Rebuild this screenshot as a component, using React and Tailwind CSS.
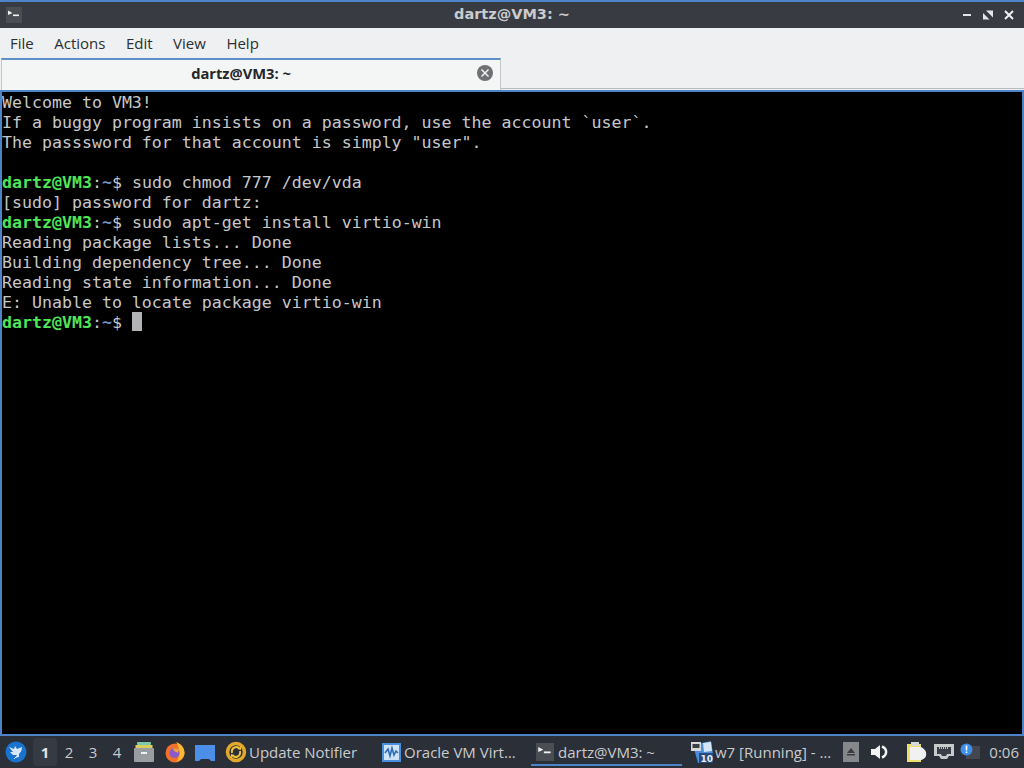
import React from 'react';

const mono = "font-['DejaVu_Sans_Mono',monospace]";

const lines = [
  { text: 'Welcome to VM3!' },
  { text: 'If a buggy program insists on a password, use the account `user`.' },
  { text: 'The passsword for that account is simply "user".' },
  { text: '\u00a0' },
  { prompt: true, text: 'sudo chmod 777 /dev/vda' },
  { text: '[sudo] password for dartz:' },
  { prompt: true, text: 'sudo apt-get install virtio-win' },
  { text: 'Reading package lists... Done' },
  { text: 'Building dependency tree... Done' },
  { text: 'Reading state information... Done' },
  { text: 'E: Unable to locate package virtio-win' },
];

const Prompt = () => (
  <>
    <span className="font-bold text-[#4fe65a]">dartz@VM3</span>
    <span>:</span>
    <span className="font-bold text-[#6f8fc4]">~</span>
    <span>$ </span>
  </>
);

const TermIcon = ({ size = 16 }) => (
  <svg width={size} height={size} viewBox="0 0 16 16">
    <rect width="16" height="16" fill="#4a4d52" />
    <path d="M2 3.500 L6.500 6 L2 8 Z" fill="#f2f2f2" />
    <rect x="7" y="7.500" width="6" height="1.600" fill="#f2f2f2" />
  </svg>
);

const TitleBar = () => (
  <div className="h-[26px] bg-[#383b42] flex items-center">
    <div className="w-[90px] pl-[6px]">
      <TermIcon />
    </div>
    <div className="flex-1 text-center font-['DejaVu_Sans',sans-serif] font-bold text-[14.500px] text-[#c9cbce]">
      dartz@VM3: ~
    </div>
    <div className="w-[90px] flex items-center justify-end gap-[9px] pr-[9px]">
      <svg width="12" height="12" viewBox="0 0 12 12">
        <rect x="2" y="5" width="8" height="2" fill="#e4e5e6" />
      </svg>
      <svg width="12" height="12" viewBox="0 0 12 12">
        <path d="M4 1.500 H11 V8.500 Z" fill="#e4e5e6" />
        <path d="M1 4 L7.500 10.500 H1 Z" fill="#e4e5e6" />
      </svg>
      <svg width="12" height="12" viewBox="0 0 12 12">
        <path d="M2 2 L10 10 M10 2 L2 10" stroke="#f0f0f0" strokeWidth="2" />
      </svg>
    </div>
  </div>
);

const MenuBar = () => (
  <div className="h-[30px] bg-[#eff0f1] flex items-center pl-[10px] gap-[20.500px] font-['Open_Sans',sans-serif] text-[15px] text-[#2b2e33]">
    {['File', 'Actions', 'Edit', 'View', 'Help'].map((m) => (
      <span key={m}>{m}</span>
    ))}
  </div>
);

const TabBar = () => (
  <div className="h-[32px] bg-[#eff0f1] flex items-end">
    <div className="w-[500px] ml-[1px] h-[32px] bg-[#f4f5f5] border-t-2 border-t-[#5e8fc6] border-x border-x-[#c4c6c8] flex items-center relative">
      <span className="w-full text-center pr-[20px] pb-[4px] font-['Open_Sans',sans-serif] font-bold text-[14.700px] text-[#23262b]">
        dartz@VM3: ~
      </span>
      <svg className="absolute right-[7px] top-[5px]" width="16" height="16" viewBox="0 0 16 16">
        <circle cx="8" cy="8" r="8" fill="#6e7074" />
        <path d="M4.500 4.500 L11.500 11.500 M11.500 4.500 L4.500 11.500" stroke="#f0f0f0" strokeWidth="1.500" />
      </svg>
    </div>
    <div className="flex-1 h-[2px] mb-[1px] bg-[#eff0f1] border-b border-b-[#b9bbbd]" />
  </div>
);

const Terminal = () => (
  <div className={`flex-1 bg-black border-x-2 border-x-[#4d84c8] border-t-2 border-t-[#4d84c8] pt-[1px] text-[#c6c8ca] text-[16.600px] leading-[20px] overflow-hidden ${mono}`}>
    {lines.map((l, i) => (
      <div key={i} className="whitespace-pre h-[20px]">
        {l.prompt && <Prompt />}
        {l.text}
      </div>
    ))}
    <div className="whitespace-pre h-[20px] flex items-start">
      <span><Prompt /></span>
      <span className="w-[10px] h-[19px] -mt-px bg-[#b2b3b5]" />
    </div>
  </div>
);

const Desk = ({ n, active }) => (
  <div className={`w-[24px] h-[28px] flex items-center justify-center rounded-sm ${active ? 'bg-[#363a43] font-bold text-[#e2e3e5]' : 'text-[#c9cbce]'}`}>
    {n}
  </div>
);

const Launcher = () => (
  <div className="flex items-center w-[24px] h-[24px] ml-[4px]">
    <svg width="24" height="24" viewBox="0 0 24 24">
      <circle cx="12" cy="12" r="10.500" fill="#1a72cc" />
      <path d="M5 7 L10 9 L11 6 L13 9 L18 7 C18 11 16 13 15 14 L15 17 L11 18 L13 15 L9 15 L6 12 L9 12 Z" fill="#d5e6f6" />
      <path d="M10 19 L13 16" stroke="#d5e6f6" strokeWidth="1" />
    </svg>
  </div>
);

const Files = () => (
  <svg width="22" height="24" viewBox="0 0 22 24">
    <rect x="4" y="2" width="14" height="3" rx="1" fill="#7cc9a5" />
    <rect x="2.500" y="5" width="17" height="3" fill="#dccd60" />
    <rect x="1" y="8" width="20" height="14" rx="1" fill="#9a9d9f" />
    <rect x="8" y="12" width="6" height="2" fill="#f0f0f0" />
  </svg>
);

const Firefox = () => (
  <svg width="22" height="24" viewBox="0 0 22 24">
    <circle cx="11" cy="13" r="9.500" fill="#f0702c" />
    <path d="M12 2 C18 4 21 9 20.500 14 C19.500 18 16 21 12 22 C17 16 16 8 12 2 Z" fill="#fbb930" />
    <circle cx="10.500" cy="13" r="5" fill="#8a5bc8" />
    <path d="M9 8 L15 9 L14 13 L10 11 Z" fill="#f4a02c" />
  </svg>
);

const Desktop = () => (
  <svg width="22" height="24" viewBox="0 0 22 24">
    <path d="M0 5 H20 V21 H16 L14 19 H6 L4 21 H0 Z" fill="#4b8fe8" />
  </svg>
);

const UpdateIcon = () => (
  <svg width="22" height="22" viewBox="0 0 22 22">
    <circle cx="11" cy="11" r="8.500" fill="none" stroke="#e3a92a" strokeWidth="3.500" />
    <path d="M7 12 C6 6 12 5 14 7 M15 10 C16 16 10 17 8 15" fill="none" stroke="#f0c23a" strokeWidth="2" />
    <path d="M12 8 L16 5 L16 9 Z M10 14 L6 17 L6 13 Z" fill="#f0c23a" />
  </svg>
);

const VboxIcon = () => (
  <svg width="19" height="19" viewBox="0 0 19 19">
    <rect width="19" height="19" fill="#4a8fdc" />
    <rect x="2" y="2" width="15" height="15" fill="#cfe3f7" />
    <path d="M3 10 L6 6 L8 13 L10 5 L12 12 L14 8 L16 10" fill="none" stroke="#2b6cb5" strokeWidth="1.600" />
  </svg>
);

const W7Icon = () => (
  <svg width="24" height="24" viewBox="0 0 24 24">
    <path d="M3 5 L21 1 L23 14 L13 23 L8 23 Z" fill="#4a8fdc" />
    <path d="M13 3 L21 2 L22 11 L14 12 Z" fill="#d4e6f6" />
    <rect x="1" y="2" width="10" height="9" fill="#d8d8d8" />
    <rect x="2.500" y="4" width="7" height="4" fill="#3a3e47" />
    <rect x="9" y="13" width="14" height="10" fill="#2a4a7c" />
    <text x="10.500" y="22" fontFamily="DejaVu Sans" fontWeight="bold" fontSize="9" fill="#e8eef5">10</text>
  </svg>
);

const TaskItem = ({ icon, label, width, active, gap = 'gap-[3px]' }) => (
  <div className={`h-[32px] flex items-center ${gap} relative whitespace-nowrap ${width}`}>
    {icon}
    <span>{label}</span>
    {active && <div className="absolute bottom-[2px] left-0 right-0 h-[2px] bg-[#4d84c8]" />}
  </div>
);

const Tray = () => (
  <div className="flex items-center ml-auto">
    <svg width="16" height="20" viewBox="0 0 16 20" className="mr-[11px]">
      <rect width="16" height="20" fill="#85878a" />
      <path d="M8 6 L12 11 H4 Z" fill="#3a3c40" />
      <rect x="4" y="12" width="8" height="1.500" fill="#3a3c40" />
    </svg>
    <svg width="18" height="18" viewBox="0 0 18 18" className="mr-[19px]">
      <path d="M1 6 H5 L10 2 V16 L5 12 H1 Z" fill="#f2f2f2" />
      <path d="M12 3.500 C17.500 6 17.500 12 12 14.500" fill="none" stroke="#f2f2f2" strokeWidth="2.500" />
    </svg>
    <svg width="20" height="22" viewBox="0 0 20 22" className="mr-[7px]">
      <rect x="0" y="3" width="14" height="18" fill="#ecdf6e" />
      <rect x="4" y="1" width="8" height="4" fill="#d8d8d8" />
      <path d="M3 6 H14 C18 8 20 11 19 15 C18 18 14 20 10 19 H3 Z" fill="#f1f1f1" />
    </svg>
    <svg width="20" height="18" viewBox="0 0 20 18" className="mr-[6px]">
      <path d="M0 1 H20 V13 H15 L13 16 H7 L5 13 H0 Z" fill="#c8c9cb" />
      <path d="M3 4 H17 V11 H13 L12 13 H8 L7 11 H3 Z" fill="#3a3e47" />
      <path d="M5 5 H15" stroke="#e8e8e8" strokeWidth="1.500" strokeDasharray="1 1" />
    </svg>
    <svg width="20" height="18" viewBox="0 0 20 18" className="mr-[9px]">
      <rect x="6" y="3" width="14" height="13" fill="#44474d" />
      <circle cx="6.500" cy="6.500" r="6" fill="#3e8fe6" />
      <rect x="5.700" y="2.500" width="1.600" height="5" fill="#fff" />
      <rect x="5.700" y="8.500" width="1.600" height="1.500" fill="#fff" />
    </svg>
    <span className="mr-[5px] text-[#c9cbce]">0:06</span>
  </div>
);

const Taskbar = () => (
  <div className="h-[32px] bg-[#2b2f38] flex items-center font-['Open_Sans',sans-serif] text-[15px] text-[#c9cbce]">
    <Launcher />
    <div className="flex items-center ml-[5px]">
      <Desk n="1" active />
      <Desk n="2" />
      <Desk n="3" />
      <Desk n="4" />
    </div>
    <div className="flex items-center gap-[9px] ml-[4px]">
      <Files />
      <Firefox />
      <Desktop />
    </div>
    <TaskItem icon={<UpdateIcon />} label="Update Notifier" width="w-[156px] ml-[8px]" gap="gap-[2px]" />
    <TaskItem icon={<VboxIcon />} label="Oracle VM Virt…" width="w-[150px] pl-[1px]" />
    <TaskItem
      icon={<TermIcon size={18} />}
      label="dartz@VM3: ~"
      width="w-[151px] pl-[5px]"
      gap="gap-[4px]"
      active
    />
    <TaskItem icon={<W7Icon />} label="w7 [Running] - …" width="w-[150px] pl-[8px]" gap="gap-[1px]" />
    <Tray />
  </div>
);

const App = () => (
  <div className="w-[1024px] h-[768px] flex flex-col overflow-hidden bg-[#2b2f38]">
    <div className="h-[2px] bg-[#4d84c8]" />
    <TitleBar />
    <MenuBar />
    <TabBar />
    <Terminal />
    <div className="h-[2px] bg-[#4d84c8]" />
    <Taskbar />
  </div>
);

export default App;
